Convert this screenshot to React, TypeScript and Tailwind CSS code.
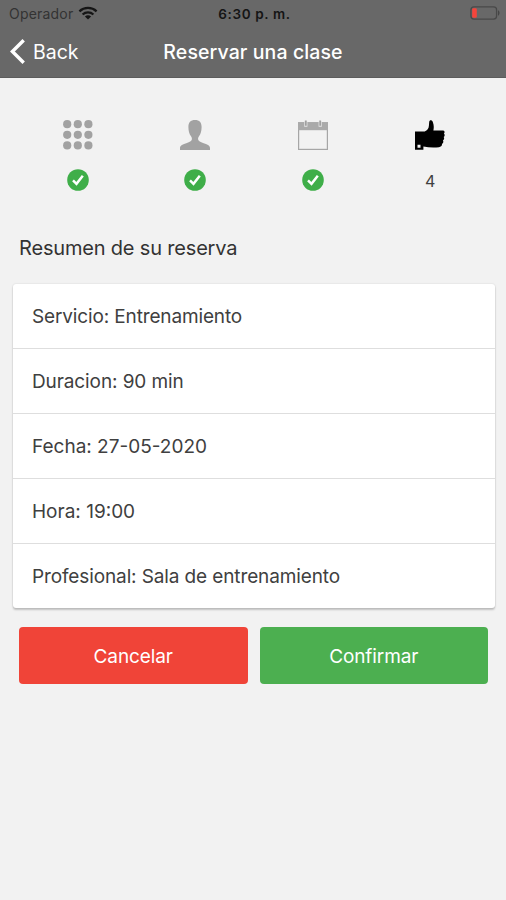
import type { ReactNode } from "react";

function WifiIcon() {
  return (
    <svg width="20" height="14" viewBox="0 0 20 14" fill="none" stroke="#151515">
      <path d="M1.4 5.3C6.2.8 13.8.8 18.6 5.3" strokeWidth="2.3" />
      <path d="M4.6 8.5C7.6 5.6 12.4 5.6 15.4 8.5" strokeWidth="2.2" />
      <path d="M10 13.4 6.9 10.4C8.6 8.9 11.4 8.9 13.1 10.4Z" fill="#151515" stroke="none" />
    </svg>
  );
}

function BatteryIcon() {
  return (
    <svg width="30" height="14" viewBox="0 0 30 14" fill="none">
      <rect x="0.9" y="0.9" width="25.7" height="12.2" rx="3" stroke="#484848" strokeWidth="1.3" />
      <rect x="2.2" y="2.2" width="4.6" height="9.6" rx="1.2" fill="#f5443b" />
      <path d="M28 4.3C30 5.2 30 8.8 28 9.7Z" fill="#454545" />
    </svg>
  );
}

function GridIcon() {
  return (
    <svg width="30" height="30" viewBox="0 0 30 30" fill="#a2a2a2">
      {[4.2, 14.8, 25.4].map((y) =>
        [4.2, 14.8, 25.4].map((x) => <circle key={`${x}-${y}`} cx={x} cy={y} r="4.1" />)
      )}
    </svg>
  );
}

function PersonIcon() {
  return (
    <svg width="30" height="30" viewBox="0 0 30 30" fill="#a2a2a2">
      <path d="M15 0C10.5 0 8.4 2.4 8.4 7c0 3.9.9 7.2 2.6 9.3 1 1.2 1.1 2.6.7 3.8-.6 1.5-2.9 2.3-5.4 3.1C2 24.6 0 25.6 0 28.2V30h30v-1.800c0-2.600-2-3.600-6.300-5-2.500-.8-4.800-1.600-5.400-3.100-.4-1.200-.3-2.600.7-3.800 1.700-2.100 2.600-5.400 2.600-9.300 0-4.600-2.100-7-6.600-7Z" />
    </svg>
  );
}

function CalendarIcon() {
  return (
    <svg width="30" height="30" viewBox="0 0 30 30" fill="none">
      <rect x="0.6" y="2.8" width="28.8" height="26.6" stroke="#a6a6a6" strokeWidth="1.2" />
      <path d="M0 2.2H30V10.2H0Z" fill="#aaa" />
      <path d="M6.2 1.200V6.800H9.400V1.200M20.600 1.200V6.800H23.800V1.200" fill="#e6e6e6" />
      <path d="M7.8.4V5.8M22.2.4V5.8" stroke="#a0a0a0" strokeWidth="1.8" />
    </svg>
  );
}

function ThumbIcon() {
  return (
    <svg width="30" height="30" viewBox="0 0 30 30" fill="#000">
      <path
        fillRule="evenodd"
        d="M0 11.4H9.7C12.300 10.300 13.700 8.600 13.900 5.700L14.200 2C14.400-.2 17-.2 17.900 2.200 19 5 18.900 8 18.400 10.600H28.200C29.900 10.900 29.800 13 28.900 13.600 30 14.400 29.900 16.400 28.700 17 29.500 18 29.200 19.900 27.900 20.500 28.800 21.700 28.100 23.500 27 24 27.200 25.900 25.800 27 24 27.200 18.800 27.700 13.300 27.500 8.400 26.600V29.800H0ZM2.500 24.800V27.800H5.500V24.800Z"
      />
    </svg>
  );
}

function CheckIcon() {
  return (
    <svg width="22" height="22" viewBox="0 0 22 22">
      <circle cx="11" cy="11" r="10.8" fill="#3fae49" />
      <path d="M6 11.300 9.500 14.800 15.800 6.700" fill="none" stroke="#fff" strokeWidth="2.5" />
    </svg>
  );
}

function Step({ icon, children }: { icon: ReactNode; children: ReactNode }) {
  return (
    <div className="flex flex-1 flex-col items-center">
      {icon}
      <div className="mt-[19px] flex h-[22px] items-center">{children}</div>
    </div>
  );
}

const details = [
  { text: "Servicio: Entrenamiento", spacing: "tracking-[-0.14px]" },
  { text: "Duracion: 90 min", spacing: "tracking-[-0.1px]" },
  { text: "Fecha: 27-05-2020", spacing: "tracking-normal" },
  { text: "Hora: 19:00", spacing: "tracking-normal" },
  { text: "Profesional: Sala de entrenamiento", spacing: "tracking-[-0.12px]" },
];

export default function App() {
  return (
    <div className="min-h-[900px] w-full bg-[#f2f2f2] font-['Inter','Liberation_Sans',sans-serif] text-[#404040]">
      <header className="h-[78px] border-b border-[#5c5c5c] bg-[#686868]">
        <div className="grid h-[26px] grid-cols-3 items-center pl-[9px] pr-[6px]">
          <div className="flex items-center gap-[5px]">
            <span className="pt-px text-[14px] tracking-[0.2px] text-[#333]">Operador</span>
            <WifiIcon />
          </div>
          <span className="pt-[2px] text-center text-[13.5px] font-semibold tracking-[0.65px] text-[#151515]">6:30 p. m.</span>
          <div className="flex justify-end">
            <BatteryIcon />
          </div>
        </div>
        <div className="grid h-[51px] grid-cols-[1fr_auto_1fr] items-center pl-[10px] pr-[10px] text-white">
          <div className="flex items-center gap-2">
            <svg width="15" height="25" viewBox="0 0 15 25" fill="none" stroke="#fff" strokeWidth="3.4">
              <path d="M13.7 1.2 2.4 12.5 13.7 23.8" />
            </svg>
            <span className="pt-[3px] text-[19.5px]">Back</span>
          </div>
          <h1 className="pt-[3px] text-[19.5px] font-medium tracking-[0.1px]">Reservar una clase</h1>
        </div>
      </header>

      <main>
        <section className="flex pl-[19px] pr-[17px] pt-[42px]">
          <Step icon={<GridIcon />}><CheckIcon /></Step>
          <Step icon={<PersonIcon />}><CheckIcon /></Step>
          <Step icon={<CalendarIcon />}><CheckIcon /></Step>
          <Step icon={<ThumbIcon />}><span className="pt-px text-[16px]">4</span></Step>
        </section>

        <h2 className="mt-[43px] pl-[19px] text-[20px] leading-[28px] tracking-[-0.18px] text-[#333]">Resumen de su reserva</h2>

        <ul className="ml-[13px] mr-[11px] mt-[22px] rounded-[3px] bg-white shadow-[0_2px_2px_rgba(0,0,0,0.2),0_0_2px_rgba(0,0,0,0.14)]">
          {details.map(({ text, spacing }) => (
            <li key={text} className="flex h-[65px] items-center border-b border-[#dedede] pl-[19px] pt-[3px] text-[19px] last:h-[64px] last:border-b-0">
              <span className={spacing}>{text}</span>
            </li>
          ))}
        </ul>

        <div className="mt-[19px] flex gap-3 pl-[19px] pr-[18px] text-[19px] text-white">
          <button className="h-[57px] flex-1 rounded-[4px] bg-[#f04438] pt-[3px] tracking-[-0.1px]">Cancelar</button>
          <button className="h-[57px] flex-1 rounded-[4px] bg-[#4caf50] pt-[3px] tracking-[-0.1px]">Confirmar</button>
        </div>
      </main>
    </div>
  );
}
